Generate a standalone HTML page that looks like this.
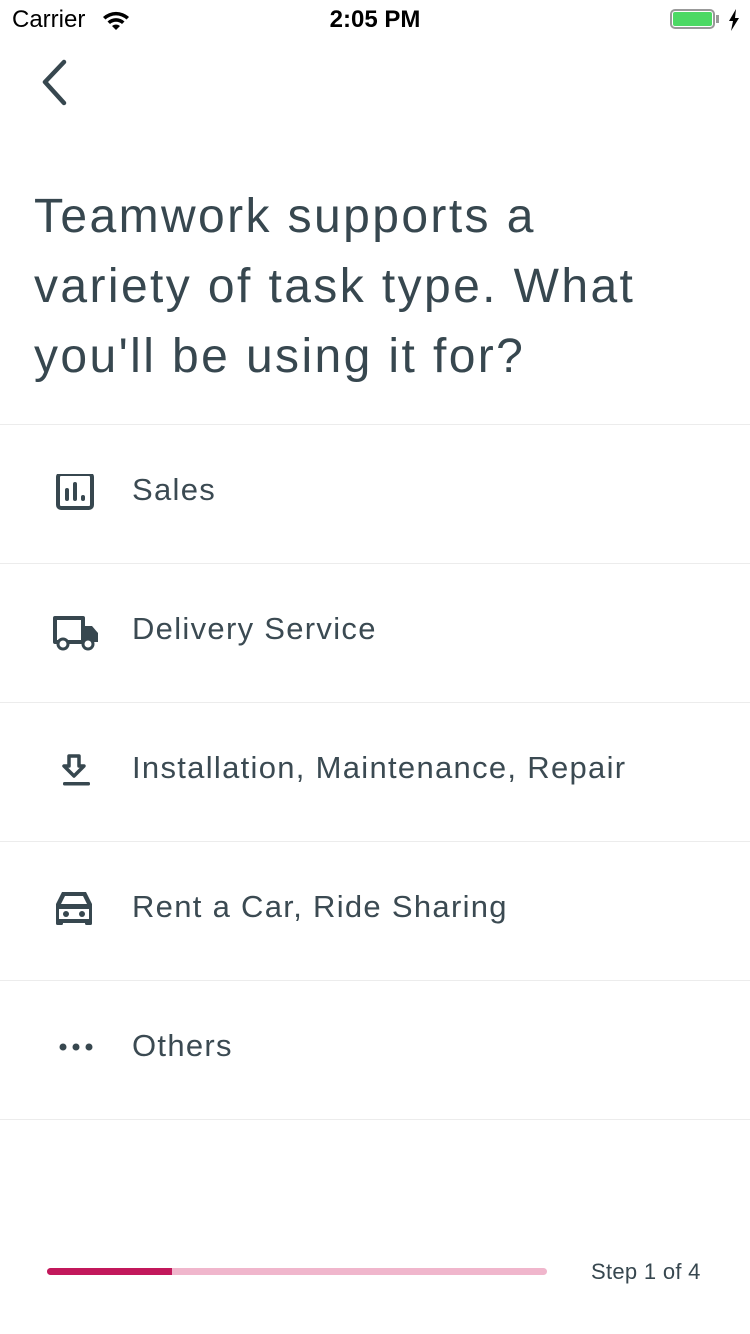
<!DOCTYPE html>
<html><head><meta charset="utf-8"><style>
body{margin:0;width:750px;height:1334px;background:#fff;font-family:"Liberation Sans",sans-serif;color:#37474f;position:relative;overflow:hidden}
.abs{position:absolute}
.row{position:absolute;left:0;width:750px;height:139px;border-top:1px solid #ececec}
.row span{position:absolute;left:132px;top:-5px;line-height:139px;font-size:31px;letter-spacing:1.3px;color:#3b4a52;white-space:nowrap}
.row svg{position:absolute;left:50px;top:49px}
.t{position:absolute;left:34px;font-size:48px;letter-spacing:2.4px;color:#37474f;white-space:nowrap;line-height:70px}
</style></head><body>
<div class="abs" style="left:12px;top:6px;font-size:24px;color:#000">Carrier</div>
<svg class="abs" style="left:101px;top:9px" width="30" height="22" viewBox="0 0 30 22"><path d="M2 8a19 19 0 0 1 26 0l-2.5 2.5a15.5 15.5 0 0 0-21 0z M6.5 12.5a12.5 12.5 0 0 1 17 0L21 15a9 9 0 0 0-12 0z M11 17a6 6 0 0 1 8 0l-4 4z" fill="#000"/></svg>
<div class="abs" style="left:0;width:750px;text-align:center;top:6px;font-size:24px;font-weight:bold;color:#000">2:05 PM</div>
<div class="abs" style="left:670px;top:9px;width:45px;height:20px;border:2px solid #999;border-radius:5px;box-sizing:border-box"></div>
<div class="abs" style="left:673px;top:12px;width:39px;height:14px;background:#4cd964;border-radius:2px"></div>
<div class="abs" style="left:716px;top:15px;width:3px;height:8px;background:#999"></div>
<svg class="abs" style="left:728px;top:9px" width="12" height="22" viewBox="0 0 12 22"><path d="M8 0L1 12h4l-2 10 8-13H7z" fill="#000"/></svg>
<svg class="abs" style="left:40px;top:58px" width="36" height="50" viewBox="0 0 36 50"><path d="M24 4L5 24l19 21" stroke="#37474f" stroke-width="4.5" fill="none" stroke-linecap="round" stroke-linejoin="round"/></svg>
<div class="t" style="top:182px">Teamwork supports a</div>
<div class="t" style="top:252px">variety of task type. What</div>
<div class="t" style="top:322px">you'll be using it for?</div>

<div class="row" style="top:424px"><svg width="48" height="40" viewBox="0 0 48 40"><rect x="8" y="0" width="34" height="34" rx="3" fill="none" stroke="#37474f" stroke-width="4"/><rect x="15" y="14" width="4" height="13" rx="2" fill="#37474f"/><rect x="23" y="8" width="4" height="19" rx="2" fill="#37474f"/><rect x="31" y="21" width="4" height="6" rx="2" fill="#37474f"/></svg><span>Sales</span></div>
<div class="row" style="top:563px"><svg width="50" height="40" viewBox="0 0 50 40"><path d="M5 5h28v24H5z" fill="none" stroke="#37474f" stroke-width="4" stroke-linejoin="round"/><path d="M33 13h9l6 7v9H33z" fill="#37474f"/><circle cx="13" cy="31" r="5" fill="#fff" stroke="#37474f" stroke-width="3"/><circle cx="38" cy="31" r="5" fill="#fff" stroke="#37474f" stroke-width="3"/></svg><span>Delivery Service</span></div>
<div class="row" style="top:702px"><svg width="50" height="40" viewBox="0 0 50 40"><path d="M19 4h10v10h5l-10 10-10-10h5z" fill="none" stroke="#37474f" stroke-width="3.5" stroke-linejoin="round"/><rect x="13" y="30" width="27" height="3.5" rx="1.5" fill="#37474f"/></svg><span>Installation, Maintenance, Repair</span></div>
<div class="row" style="top:841px"><svg width="50" height="40" viewBox="0 0 50 40"><path d="M12 1h24l6 12v19H6V13z" fill="#37474f"/><path d="M15 5h18l4 8H11z" fill="#fff"/><rect x="9" y="18" width="30" height="10" fill="#fff"/><circle cx="16" cy="23" r="3" fill="#37474f"/><circle cx="32" cy="23" r="3" fill="#37474f"/><rect x="6" y="28" width="7" height="6" rx="1.5" fill="#37474f"/><rect x="35" y="28" width="7" height="6" rx="1.5" fill="#37474f"/></svg><span>Rent a Car, Ride Sharing</span></div>
<div class="row" style="top:980px"><svg width="50" height="40" viewBox="0 0 50 40"><circle cx="13" cy="17" r="3.5" fill="#37474f"/><circle cx="26" cy="17" r="3.5" fill="#37474f"/><circle cx="39" cy="17" r="3.5" fill="#37474f"/></svg><span>Others</span></div>
<div class="abs" style="left:0;top:1119px;width:750px;border-top:1px solid #ececec"></div>

<div class="abs" style="left:47px;top:1268px;width:500px;height:7px;background:#f0b6cc;border-radius:4px"></div>
<div class="abs" style="left:47px;top:1268px;width:125px;height:7px;background:#c2185b;border-radius:4px 0 0 4px"></div>
<div class="abs" style="left:591px;top:1259px;font-size:22px;letter-spacing:0.3px;color:#37474f">Step 1 of 4</div>
</body></html>
